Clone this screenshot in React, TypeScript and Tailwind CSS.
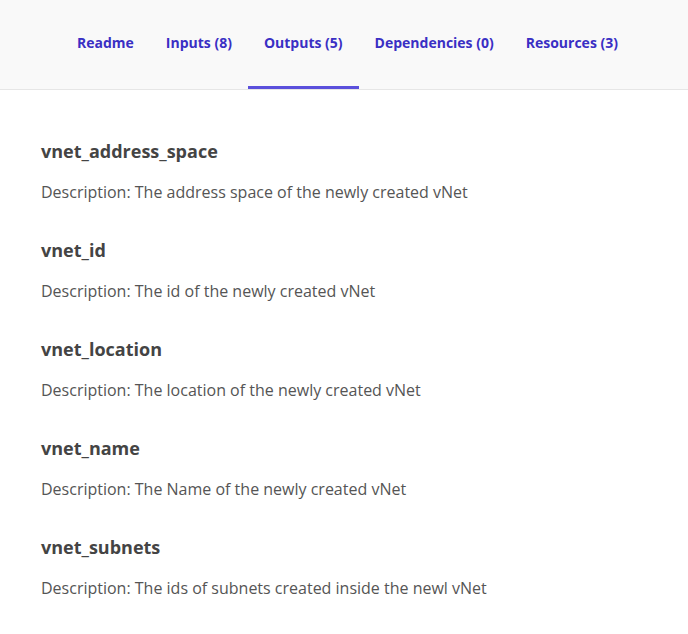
import React from "react";

const tabs = [
  { label: "Readme", active: false },
  { label: "Inputs (8)", active: false },
  { label: "Outputs (5)", active: true },
  { label: "Dependencies (0)", active: false },
  { label: "Resources (3)", active: false },
];

const outputs = [
  { name: "vnet_address_space", desc: "The address space of the newly created vNet" },
  { name: "vnet_id", desc: "The id of the newly created vNet" },
  { name: "vnet_location", desc: "The location of the newly created vNet" },
  { name: "vnet_name", desc: "The Name of the newly created vNet" },
  { name: "vnet_subnets", desc: "The ids of subnets created inside the newl vNet" },
];

export default function App() {
  return (
    <div className="min-h-[634px] bg-white" style={{ fontFamily: '"Open Sans", "Noto Sans", sans-serif' }}>
      <div className="flex h-[90px] justify-center border-b border-[#e6e6e6] bg-[#f9f9f9] pl-[7px]">
        {tabs.map((t) => (
          <div
            key={t.label}
            className={`flex h-full items-center border-b-[3px] px-4 pb-[1px] text-[14px] font-bold text-[#3a2fc4] ${
              t.active ? "border-[#5b50dc]" : "border-transparent"
            }`}
          >
            {t.label}
          </div>
        ))}
      </div>
      <div className="flex flex-col gap-[34px] px-[41px] pt-[49px]">
        {outputs.map((o) => (
          <div key={o.name} className="flex flex-col gap-[17px]">
            <div className="text-[18px] leading-[24px] font-bold text-[#444444]">{o.name}</div>
            <div className="text-[16px] leading-[24px] text-[#555555]">Description: {o.desc}</div>
          </div>
        ))}
      </div>
    </div>
  );
}
